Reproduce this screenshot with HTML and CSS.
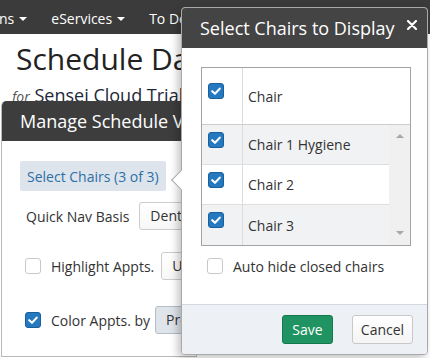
FILE: index.html
```html
<!DOCTYPE html>
<html lang="en">
<head>
<meta charset="utf-8">
<title>Select Chairs to Display</title>
<link rel="stylesheet" href="styles.css">
</head>
<body>
<div class="screen">
  <nav class="topnav">
    <span class="nav-item">ns<i class="caret"></i></span>
    <span class="nav-item">eServices<i class="caret"></i></span>
    <span class="nav-item">To Do</span>
  </nav>

  <header class="page-head">
    <h1 class="page-title">Schedule Day</h1>
    <p class="page-sub"><em>for</em> Sensei Cloud Trial</p>
  </header>

  <section class="modal">
    <div class="modal-header">Manage Schedule View</div>
    <div class="modal-body">
      <button class="chairs-btn" type="button">Select Chairs (3 of 3)</button>
      <div class="form-row row-nav">
        <span class="row-label">Quick Nav Basis</span>
        <span class="select">Dentist</span>
      </div>
      <div class="form-row row-hl">
        <span class="cb"></span>
        <span class="row-label">Highlight Appts.</span>
        <span class="select">Unscheduled</span>
      </div>
      <div class="form-row row-color">
        <span class="cb on"><svg width="14" height="14" viewBox="0 0 14 14"><path d="M3.2 7.2 L6 9.8 L10.8 4.6" fill="none" stroke="#fff" stroke-width="2.1" stroke-linecap="round" stroke-linejoin="round"/></svg></span>
        <span class="row-label">Color Appts. by</span>
        <span class="select select-active">Provider</span>
      </div>
    </div>
  </section>

  <section class="popover">
    <span class="arrow"></span>
    <div class="pop-header">
      <span class="pop-title">Select Chairs to Display</span>
      <svg class="close" width="10" height="10" viewBox="0 0 10 10"><path d="M1 1 L9 9 M9 1 L1 9" stroke="#fff" stroke-width="2.2" stroke-linecap="round"/></svg>
    </div>
    <div class="pop-body">
      <div class="chair-table">
        <div class="ct-head">
          <div class="ct-check"><span class="cb on"><svg width="14" height="14" viewBox="0 0 14 14"><path d="M3.2 7.2 L6 9.8 L10.8 4.6" fill="none" stroke="#fff" stroke-width="2.1" stroke-linecap="round" stroke-linejoin="round"/></svg></span></div>
          <div class="ct-name">Chair</div>
        </div>
        <div class="ct-scroll">
          <div class="ct-rows">
            <div class="ct-row alt">
              <div class="ct-check"><span class="cb on"><svg width="14" height="14" viewBox="0 0 14 14"><path d="M3.2 7.2 L6 9.8 L10.8 4.6" fill="none" stroke="#fff" stroke-width="2.1" stroke-linecap="round" stroke-linejoin="round"/></svg></span></div>
              <div class="ct-name">Chair 1 Hygiene</div>
            </div>
            <div class="ct-row">
              <div class="ct-check"><span class="cb on"><svg width="14" height="14" viewBox="0 0 14 14"><path d="M3.2 7.2 L6 9.8 L10.8 4.6" fill="none" stroke="#fff" stroke-width="2.1" stroke-linecap="round" stroke-linejoin="round"/></svg></span></div>
              <div class="ct-name">Chair 2</div>
            </div>
            <div class="ct-row alt">
              <div class="ct-check"><span class="cb on"><svg width="14" height="14" viewBox="0 0 14 14"><path d="M3.2 7.2 L6 9.8 L10.8 4.6" fill="none" stroke="#fff" stroke-width="2.1" stroke-linecap="round" stroke-linejoin="round"/></svg></span></div>
              <div class="ct-name">Chair 3</div>
            </div>
          </div>
          <div class="scrollbar">
            <i class="sb-up"></i>
            <i class="sb-down"></i>
          </div>
        </div>
      </div>
      <div class="auto-hide">
        <span class="cb"></span>
        <span>Auto hide closed chairs</span>
      </div>
    </div>
    <div class="pop-footer">
      <button class="btn btn-save" type="button">Save</button>
      <button class="btn btn-cancel" type="button">Cancel</button>
    </div>
  </section>
</div>
</body>
</html>
```

FILE: styles.css
```css
* { box-sizing: border-box; }
html, body { margin: 0; padding: 0; }
body {
  font-family: "Open Sans", "Noto Sans", sans-serif;
  font-size: 14px;
  color: #333;
  background: #fff;
}
.screen {
  position: relative;
  width: 430px;
  height: 358px;
  overflow: hidden;
  background: #fff;
}

/* top navigation */
.topnav {
  display: flex;
  gap: 24px;
  height: 34px;
  padding-top: 9px;
  margin-left: -1px;
  background: #3b3b3b;
  color: #fff;
  line-height: 20px;
  white-space: nowrap;
  overflow: hidden;
}
.caret {
  display: inline-block;
  width: 0;
  height: 0;
  border-left: 4px solid transparent;
  border-right: 4px solid transparent;
  border-top: 4px solid #fff;
  margin-left: 5px;
  vertical-align: 3px;
}

/* page heading */
.page-head { padding-left: 12px; }
.page-title {
  margin: 5px 0 0 4px;
  font-size: 30px;
  font-weight: 400;
  line-height: 40px;
  color: #222;
}
.page-sub {
  margin: 4px 0 0;
  font-size: 18px;
  line-height: 24px;
  color: #1d2838;
  white-space: nowrap;
}
.page-sub em { font-size: 14px; color: #555; }

/* background modal (its right part lies under the popover) */
.modal {
  position: absolute;
  left: 1px;
  top: 101px;
  width: 196px;
  height: 256px;
  overflow: hidden;
  background: #fff;
  border: 1px solid #b9b9b9;
  border-top: 0;
  border-radius: 5px 5px 0 0;
}
.modal-header {
  height: 40px;
  margin: 0 -1px;
  padding-left: 19px;
  line-height: 40px;
  font-size: 18px;
  color: #fff;
  background: #3d3d3d;
  border-radius: 5px 5px 0 0;
  white-space: nowrap;
}
.modal-body {
  display: flex;
  flex-direction: column;
  align-items: flex-start;
  padding: 20px 0 0 18px;
}
.chairs-btn {
  height: 30px;
  padding: 0 7px;
  border: 0;
  border-radius: 2px;
  background: #dde4eb;
  color: #2d6fa7;
  font: inherit;
  font-size: 14px;
}
.form-row {
  display: flex;
  align-items: center;
  height: 28px;
  white-space: nowrap;
}
.row-nav { margin-top: 11px; padding-left: 6px; }
.row-nav .select { margin-left: 10px; }
.row-hl { margin-top: 22px; padding-left: 5px; }
.row-color { margin-top: 26px; padding-left: 5px; }
.row-hl .row-label, .row-color .row-label { margin-left: 10px; }
.row-hl .select { margin-left: 7px; }
.row-color .select { margin-left: 5px; }
.select {
  display: inline-block;
  flex: none;
  width: 56px;
  height: 28px;
  padding: 0 10px;
  overflow: hidden;
  line-height: 26px;
  border: 1px solid #cccccc;
  border-radius: 3px;
  background: linear-gradient(#ffffff, #f7f7f7);
  color: #333;
}
.select-active {
  background: #dfe4ea;
  border-color: #b7bdc4;
}

/* checkboxes */
.cb {
  display: inline-block;
  flex: none;
  width: 16px;
  height: 16px;
  border: 1px solid #c8c8c8;
  border-radius: 3px;
  background: #fff;
}
.cb.on {
  background: #2479c0;
  border-color: #1b5f98;
}
.cb svg { display: block; }

/* popover */
.popover {
  position: absolute;
  left: 181px;
  top: 7px;
  width: 247px;
  height: 348px;
  display: flex;
  flex-direction: column;
  background: #fff;
  border: 1px solid #a9a9a9;
  border-radius: 4px;
  box-shadow: -3px 3px 9px rgba(0, 0, 0, 0.25);
}
.arrow {
  position: absolute;
  left: -8px;
  top: 165px;
  width: 14px;
  height: 14px;
  background: #fff;
  border-left: 1px solid #a9a9a9;
  border-bottom: 1px solid #a9a9a9;
  transform: rotate(45deg);
}
.pop-header {
  display: flex;
  justify-content: space-between;
  align-items: flex-start;
  height: 40px;
  padding: 0 10px 0 18px;
  background: #444;
  border-radius: 3px 3px 0 0;
}
.pop-title {
  font-size: 18px;
  line-height: 40px;
  color: #fff;
  white-space: nowrap;
}
.close { margin-top: 12px; }
.pop-body { padding: 19px 16px 0 19px; }

.chair-table {
  width: 210px;
  border: 1px solid #a3a3a3;
}
.ct-head {
  display: flex;
  height: 57px;
  border-bottom: 1px solid #cdcdcd;
}
.ct-check {
  flex: none;
  width: 41px;
  padding: 15px 0 0 6px;
  border-right: 1px solid #dcdcdc;
}
.ct-name {
  flex: 1;
  display: flex;
  align-items: center;
  padding-left: 5px;
  color: #333;
  white-space: nowrap;
}
.ct-scroll { display: flex; height: 120px; }
.ct-rows { flex: 1; }
.ct-row {
  display: flex;
  height: 40px;
  background: #fff;
  border-bottom: 1px solid #dedede;
}
.ct-row:last-child { border-bottom: 0; }
.ct-row.alt { background: #f1f2f4; }
.ct-row .ct-check { padding-top: 7px; }
.scrollbar {
  flex: none;
  width: 21px;
  display: flex;
  flex-direction: column;
  align-items: center;
  justify-content: space-between;
  padding: 9px 0 10px;
  background: #f0f0f0;
}
.sb-up, .sb-down {
  display: block;
  width: 0;
  height: 0;
  border-left: 4px solid transparent;
  border-right: 4px solid transparent;
}
.sb-up { border-bottom: 4px solid #a8a8a8; }
.sb-down { border-top: 4px solid #a8a8a8; }

.auto-hide {
  display: flex;
  align-items: center;
  gap: 10px;
  height: 18px;
  margin-top: 11px;
  padding-left: 6px;
  color: #333;
  white-space: nowrap;
}

.pop-footer {
  margin-top: auto;
  height: 50px;
  display: flex;
  justify-content: flex-end;
  align-items: flex-start;
  gap: 19px;
  padding: 10px 14px 0 0;
  background: #edf1f5;
  border-top: 1px solid #d3d9df;
  border-radius: 0 0 3px 3px;
}
.btn {
  height: 29px;
  padding: 0;
  font: inherit;
  font-size: 14px;
  border-radius: 3px;
}
.btn-save {
  width: 51px;
  background: #1f9462;
  border: 1px solid #16784d;
  color: #fff;
}
.btn-cancel {
  width: 61px;
  background: linear-gradient(#ffffff, #f4f4f4);
  border: 1px solid #c8c8c8;
  color: #333;
}
```
